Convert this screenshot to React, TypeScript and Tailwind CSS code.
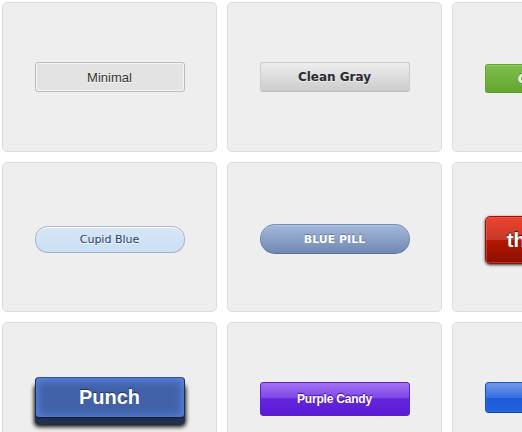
const buttons = [
  {
    label: "Minimal",
    className:
      "h-[30px] rounded-[3px] border border-[#bbb] bg-[#e3e3e3] text-[#333] font-['Liberation_Sans',Arial,sans-serif] text-[13px] shadow-[inset_0_0_1px_1px_#f6f6f6] [text-shadow:0_1px_0_#fff]",
  },
  {
    label: "Clean Gray",
    className:
      "h-[30px] rounded-[3px] border border-[#ccc] border-b-[#bbb] bg-linear-to-b from-[#eeeeee] to-[#cccccc] text-[#2a2a33] font-['DejaVu_Sans',Verdana,sans-serif] font-bold text-[12px] [text-shadow:0_1px_0_#eee]",
  },
  {
    label: "Cupid Green",
    className:
      "mt-[3px] h-[29px] rounded-[3px] border border-[#63a62f] border-b-[#5b992b] bg-linear-to-b from-[#7fbf4d] to-[#63a62f] text-white font-['DejaVu_Sans',Verdana,sans-serif] font-bold text-[12px] shadow-[inset_0_1px_0_0_#96ca6d] [text-shadow:0_-1px_0_#4c9021]",
  },
  {
    label: "Cupid Blue",
    className:
      "mt-[5px] h-[27px] rounded-[13px] border border-[#a7b6c7] border-t-[#abbbcc] border-b-[#a1afbf] bg-linear-to-b from-[#d7e5f5] to-[#cbe0f5] text-[#1a3e66] font-['DejaVu_Sans',Verdana,sans-serif] text-[11px] shadow-[inset_0_1px_0_0_#fff] [text-shadow:0_1px_1px_#fff]",
  },
  {
    label: "Blue Pill",
    className:
      "mt-[4px] h-[30px] rounded-[15px] border border-[#6c84ab] border-t-[#758fba] border-b-[#5c6f91] bg-linear-to-b from-[#a5b8da] to-[#7089b3] text-white uppercase font-['DejaVu_Sans',Verdana,sans-serif] font-bold text-[11px] shadow-[inset_0_1px_0_0_#aec3e5] [text-shadow:0_-1px_1px_#64799e]",
  },
  {
    label: "thoughtbot",
    className:
      "mt-[6px] h-[48px] rounded-[5px] border border-[#951100] bg-[linear-gradient(to_bottom,#ee432e_0%,#c63929_50%,#b51700_50%,#891100_100%)] text-white font-['Liberation_Sans',Arial,sans-serif] font-bold text-[20px] shadow-[inset_0_0_0_1px_rgba(255,115,100,0.4),0_1px_3px_#333] [text-shadow:0_-1px_1px_rgba(0,0,0,0.8)]",
  },
  {
    label: "Punch",
    className:
      "h-[41px] rounded-[4px] border border-[#1f2d4d] border-t-[#38538c] border-b-[#151e33] bg-[#4162a8] text-white font-['Liberation_Sans',Arial,sans-serif] font-bold text-[20px] shadow-[inset_0_1px_10px_1px_#5c8bee,0_1px_0_#1d2c4d,0_6px_0_#1f3053,0_8px_4px_1px_#111] [text-shadow:0_-1px_1px_#1e2d4d]",
  },
  {
    label: "Purple Candy",
    className:
      "mt-[4px] h-[34px] rounded-[3px] border border-[#5a1fd0] bg-[linear-gradient(to_bottom,#a272f0_0%,#8048e8_45%,#6425dc_50%,#5a1bd6_100%)] text-white font-['Liberation_Sans',Arial,sans-serif] font-bold text-[12px] tracking-[-0.2px] [text-shadow:0_-1px_1px_#3b0d8f]",
  },
  {
    label: "Shiny Blue",
    className:
      "mt-[1px] h-[31px] rounded-[4px] border border-[#1b4db3] border-t-[#1f58cc] border-b-[#174299] bg-[linear-gradient(to_bottom,#759ae9_0%,#376fe0_50%,#1a5ad9_50%,#2463de_100%)] text-white font-['Liberation_Sans',Arial,sans-serif] font-bold text-[12px] shadow-[inset_0_0_2px_0_rgba(57,140,255,0.8)] [text-shadow:0_-1px_1px_#1a5ad9]",
  },
];

const App = (): JSX.Element => {
  return (
    <div className="w-[522px] h-[432px] overflow-hidden bg-white">
      <div className="grid grid-cols-[repeat(3,215px)] auto-rows-[150px] gap-[10px] p-[2px] w-max">
        {buttons.map((b) => (
          <div
            key={b.label}
            className="flex items-center justify-center rounded-[5px] border border-[#dcdcdc] bg-[#eeeeee]"
          >
            <button
              className={
                "flex w-[150px] shrink-0 items-center justify-center leading-none cursor-pointer " +
                b.className
              }
            >
              {b.label}
            </button>
          </div>
        ))}
      </div>
    </div>
  );
};

export default App;
